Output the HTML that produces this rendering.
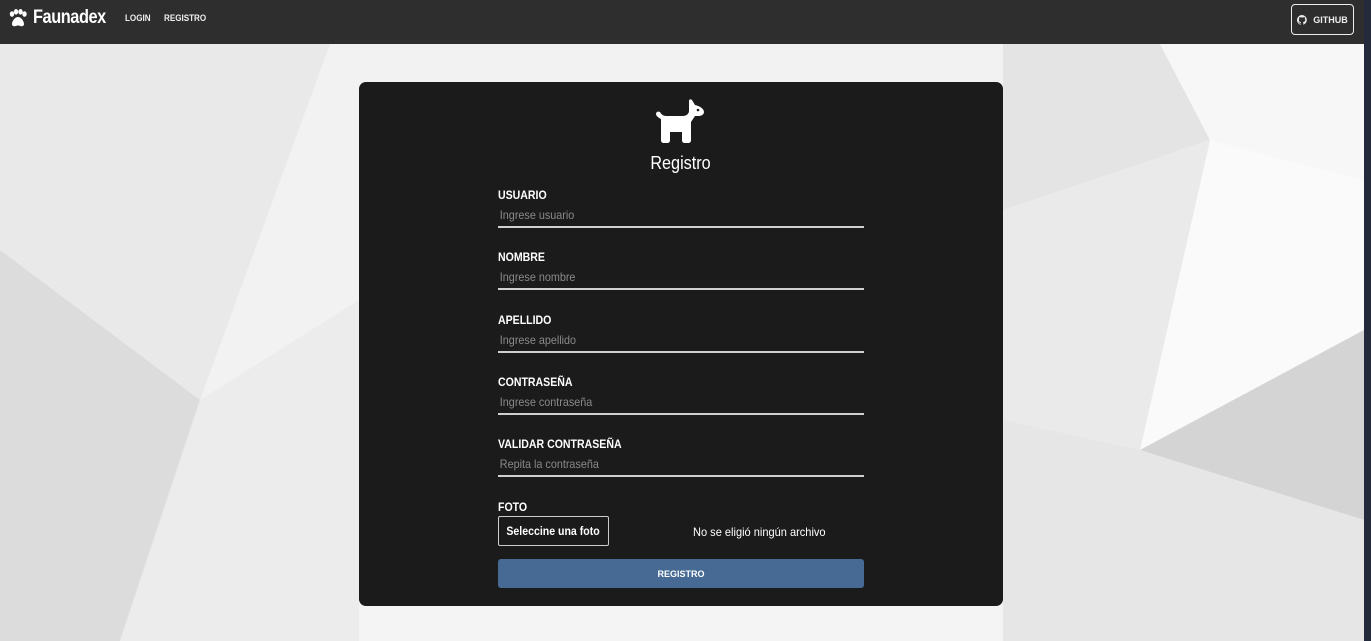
<!DOCTYPE html>
<html><head><meta charset="utf-8"><style>
*{box-sizing:border-box;margin:0;padding:0}
body{width:1371px;height:641px;overflow:hidden;font-family:"Liberation Sans",sans-serif;background:#f0f0f0;position:relative}
.bg{position:absolute;left:0;top:0}
.nav{position:absolute;left:0;top:0;width:1364px;height:44px;background:#2e2e2e}
.sb{position:absolute;left:1364px;top:0;width:7px;height:641px;background:#252a3a}
.brand{position:absolute;left:8px;top:7px;color:#fff;font-weight:bold;font-size:19px;letter-spacing:-0.5px;display:flex;align-items:center;gap:5px}
.brand span{display:inline-block;transform:scaleX(0.86);transform-origin:left}
.nl{position:absolute;top:13px;color:#eee;font-weight:bold;font-size:9.5px;transform:scaleX(0.85);transform-origin:left}
.gh{position:absolute;left:1291px;top:4px;width:63px;height:31px;border:1.5px solid #eee;border-radius:4px;color:#eee;font-size:9px;font-weight:bold;display:flex;align-items:center;justify-content:center;gap:6px}
.card{position:absolute;left:359px;top:82px;width:644px;height:524px;background:#1b1b1b;border-radius:7px}
.title{position:absolute;left:0;width:644px;top:71px;text-align:center;color:#fff;font-size:18px}
.title span{display:inline-block;transform:scaleX(0.9)}
.f{position:absolute;left:139px;width:366px}
.f .l{color:#fff;font-weight:bold;font-size:12px;transform:scaleX(0.88);transform-origin:left}
.f .p{color:#8a8a8a;font-size:12px;margin-top:6px;padding-left:2px;height:18px;transform:scaleX(0.9);transform-origin:left}
.f .u{height:2px;background:#cfcfcf;margin-top:0}
.btnf{position:absolute;left:139px;top:434px;width:111px;height:30px;border:1px solid #ccc;border-radius:2px;color:#fff;font-weight:bold;font-size:12px;display:flex;align-items:center;justify-content:center}
.btnf span{display:inline-block;transform:scaleX(0.88);white-space:nowrap}
.nf{position:absolute;left:334px;top:443px;color:#fff;font-size:12px;transform:scaleX(0.92);transform-origin:left}
.sub{position:absolute;left:139px;top:477px;width:366px;height:29px;background:#466a93;border-radius:3px;color:#fff;font-size:9px;font-weight:bold;display:flex;align-items:center;justify-content:center}
</style></head><body>
<svg class="bg" width="1371" height="641">
<rect width="1371" height="641" fill="#f2f2f2"/>
<polygon points="0,44 330,44 200,400 0,250" fill="#e9e9e9"/>
<polygon points="0,250 200,400 120,641 0,641" fill="#dcdcdc"/>
<polygon points="200,400 359,300 359,641 120,641" fill="#ececec"/>
<polygon points="359,606 1003,606 1003,641 359,641" fill="#f4f4f4"/>
<polygon points="1003,44 1160,44 1210,140 1003,210" fill="#e4e4e4"/>
<polygon points="1210,140 1364,180 1364,330 1140,450" fill="#fafafa"/>
<polygon points="1003,210 1210,140 1140,450 1003,420" fill="#eaeaea"/>
<polygon points="1140,450 1364,330 1364,520" fill="#d4d4d4"/>
<polygon points="1003,420 1140,450 1364,520 1364,641 1003,641" fill="#e6e6e6"/>
<polygon points="1160,44 1364,44 1364,180 1210,140" fill="#f7f7f7"/>
</svg>
<div class="nav">
<div class="brand"><svg width="20" height="18" viewBox="0 0 20 18" fill="#fff"><ellipse cx="4" cy="5" rx="2.2" ry="2.8"/><ellipse cx="8" cy="2.8" rx="2.2" ry="2.8"/><ellipse cx="12.5" cy="2.8" rx="2.2" ry="2.8"/><ellipse cx="16.5" cy="5" rx="2.2" ry="2.8"/><path d="M10 8c-3 0-6 4-6 7 0 2 2 2.5 3 2.2 1.5-.4 2-.7 3-.7s1.5.3 3 .7c1 .3 3-.2 3-2.2 0-3-3-7-6-7z"/></svg><span>Faunadex</span></div>
<div class="nl" style="left:125px">LOGIN</div>
<div class="nl" style="left:164px">REGISTRO</div>
<div class="gh"><svg width="10" height="10" viewBox="0 0 16 16" fill="#eee"><path d="M8 0a8 8 0 0 0-2.5 15.6c.4 0 .5-.2.5-.4v-1.5c-2.2.5-2.7-1-2.7-1-.4-.9-.9-1.2-.9-1.2-.7-.5.1-.5.1-.5.8.1 1.200.8 1.2.8.7 1.3 1.9.9 2.4.7 0-.5.3-.9.5-1.1-1.8-.2-3.6-.9-3.6-4 0-.9.3-1.6.8-2.1-.1-.2-.4-1 .1-2.1 0 0 .7-.2 2.2.8a7.5 7.5 0 0 1 4 0c1.5-1 2.2-.8 2.2-.8.4 1.1.2 1.9.1 2.1.5.6.8 1.3.8 2.100 0 3.1-1.9 3.7-3.6 3.9.3.3.5.8.5 1.5v2.2c0 .2.1.5.6.4A8 8 0 0 0 8 0z"/></svg>GITHUB</div>
</div>
<div class="sb"></div>
<div class="card">
<svg style="position:absolute;left:296px;top:16px" width="52" height="46" viewBox="0 0 52 46" fill="#fff"><path d="M5 14c-2-1-4 0-4 2 0 2 3 4 5 5v21c0 2 1 3 3 3h3c2 0 3-1 3-3v-8h12v8c0 2 1 3 3 3h3c2 0 3-1 3-3V24l4-6h4c3 0 5-2 5-4 0-3-4-6-9-7l-3-5c-1-1-3-1-3 1v10c0 3-3 5-6 5H11c-3 0-5-2-6-4z"/><circle cx="43" cy="12" r="1.3" fill="#1b1b1b"/></svg>
<div class="title"><span>Registro</span></div>
<div class="f" style="top:106px"><div class="l">USUARIO</div><div class="p">Ingrese usuario</div><div class="u"></div></div>
<div class="f" style="top:168px"><div class="l">NOMBRE</div><div class="p">Ingrese nombre</div><div class="u"></div></div>
<div class="f" style="top:231px"><div class="l">APELLIDO</div><div class="p">Ingrese apellido</div><div class="u"></div></div>
<div class="f" style="top:293px"><div class="l">CONTRASEÑA</div><div class="p">Ingrese contraseña</div><div class="u"></div></div>
<div class="f" style="top:355px"><div class="l">VALIDAR CONTRASEÑA</div><div class="p">Repita la contraseña</div><div class="u"></div></div>
<div class="f" style="top:418px"><div class="l">FOTO</div></div>
<div class="btnf"><span>Seleccine una foto</span></div>
<div class="nf">No se eligió ningún archivo</div>
<div class="sub">REGISTRO</div>
</div>
</body></html>
